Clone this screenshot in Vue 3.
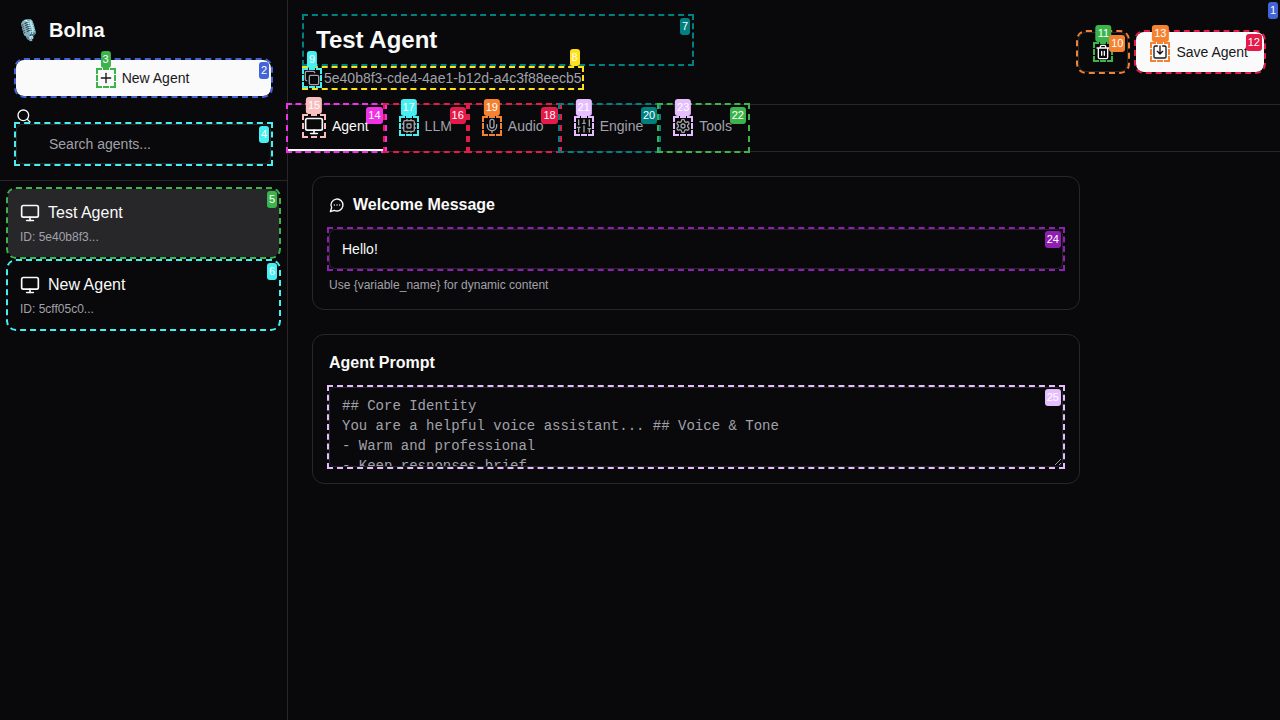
<script setup>
const icons = {
  plus: [['path', 'M5 12h14'], ['path', 'M12 5v14']],
  search: [['circle', 11, 11, 8], ['path', 'm21 21-4.3-4.3']],
  monitor: [['rect', 2, 3, 20, 14, 2], ['path', 'M8 21h8'], ['path', 'M12 17v4']],
  copy: [['rect', 8, 8, 14, 14, 2], ['path', 'M4 16c-1.1 0-2-.9-2-2V4c0-1.1.9-2 2-2h10c1.1 0 2 .9 2 2']],
  cpu: [['rect', 4, 4, 16, 16, 2], ['rect', 9, 9, 6, 6, 1], ['path', 'M15 2v2M15 20v2M2 15h2M2 9h2M20 15h2M20 9h2M9 2v2M9 20v2']],
  mic: [['path', 'M12 2a3 3 0 0 0-3 3v7a3 3 0 0 0 6 0V5a3 3 0 0 0-3-3Z'], ['path', 'M19 10v2a7 7 0 0 1-14 0v-2'], ['path', 'M12 19v3']],
  sliders: [['path', 'M4 21v-7M4 10V3M12 21v-9M12 8V3M20 21v-5M20 12V3M2 14h4M10 8h4M18 16h4']],
  gear: [['path', 'M12.22 2h-.44a2 2 0 0 0-2 2v.18a2 2 0 0 1-1 1.73l-.43.25a2 2 0 0 1-2 0l-.15-.08a2 2 0 0 0-2.73.73l-.22.38a2 2 0 0 0 .73 2.73l.15.1a2 2 0 0 1 1 1.72v.51a2 2 0 0 1-1 1.74l-.15.09a2 2 0 0 0-.73 2.73l.22.38a2 2 0 0 0 2.73.73l.15-.08a2 2 0 0 1 2 0l.43.25a2 2 0 0 1 1 1.73V20a2 2 0 0 0 2 2h.44a2 2 0 0 0 2-2v-.18a2 2 0 0 1 1-1.73l.43-.25a2 2 0 0 1 2 0l.15.08a2 2 0 0 0 2.73-.73l.22-.39a2 2 0 0 0-.73-2.73l-.15-.08a2 2 0 0 1-1-1.74v-.5a2 2 0 0 1 1-1.74l.15-.09a2 2 0 0 0 .73-2.73l-.22-.38a2 2 0 0 0-2.73-.73l-.15.08a2 2 0 0 1-2 0l-.43-.25a2 2 0 0 1-1-1.73V4a2 2 0 0 0-2-2z'], ['circle', 12, 12, 3]],
  trash: [['path', 'M3 6h18M19 6v14c0 1-1 2-2 2H7c-1 0-2-1-2-2V6M8 6V4c0-1 1-2 2-2h4c1 0 2 1 2 2v2M10 11v6M14 11v6']],
  save: [['path', 'M8 3H5a2 2 0 0 0-2 2v14a2 2 0 0 0 2 2h14a2 2 0 0 0 2-2V5a2 2 0 0 0-2-2h-3'], ['path', 'M12 3v12M8 11l4 4 4-4']],
  chat: [['path', 'M7.9 20A9 9 0 1 0 4 16.1L2 22Z'], ['path', 'M8 12h.01M12 12h.01M16 12h.01']]
}

const tabs = [
  { name: 'Agent', icon: 'monitor', color: '#f032e6', n: 14, iconColor: '#fabebe', iconN: 15, big: true, active: true },
  { name: 'LLM', icon: 'cpu', color: '#e6194b', n: 16, iconColor: '#46f0f0', iconN: 17 },
  { name: 'Audio', icon: 'mic', color: '#e6194b', n: 18, iconColor: '#f58231', iconN: 19 },
  { name: 'Engine', icon: 'sliders', color: '#008080', n: 20, iconColor: '#e6beff', iconN: 21 },
  { name: 'Tools', icon: 'gear', color: '#3cb44b', n: 22, iconColor: '#e6beff', iconN: 23 }
]

const agents = [
  { name: 'Test Agent', id: 'ID: 5e40b8f3...', color: '#3cb44b', n: 5, active: true },
  { name: 'New Agent', id: 'ID: 5cff05c0...', color: '#46f0f0', n: 6 }
]

const prompt = '## Core Identity\nYou are a helpful voice assistant... ## Voice & Tone\n- Warm and professional\n- Keep responses brief\n- Ask one question at a time'

const shape = (s) => {
  if (s[0] === 'path') return { tag: 'path', attrs: { d: s[1] } }
  if (s[0] === 'circle') return { tag: 'circle', attrs: { cx: s[1], cy: s[2], r: s[3] } }
  return { tag: 'rect', attrs: { x: s[1], y: s[2], width: s[3], height: s[4], rx: s[5] } }
}
</script>

<template>
  <div class="app">
    <aside class="sidebar">
      <div class="side-head">
        <div class="logo"><span class="emoji">🎙️</span><span>Bolna</span></div>
        <button class="btn primary wide mark" :style="{ outlineColor: '#4363d8' }">
          <span class="icon mark" :style="{ outlineColor: '#3cb44b' }">
            <svg viewBox="0 0 24 24"><component :is="shape(s).tag" v-for="(s, i) in icons.plus" :key="i" v-bind="shape(s).attrs" /></svg>
            <span class="badge above" :style="{ background: '#3cb44b' }">3</span>
          </span>
          New Agent
          <span class="badge corner" :style="{ background: '#4363d8' }">2</span>
        </button>
        <svg class="search-icon" viewBox="0 0 24 24"><component :is="shape(s).tag" v-for="(s, i) in icons.search" :key="i" v-bind="shape(s).attrs" /></svg>
        <div class="mark search-wrap" :style="{ outlineColor: '#46f0f0' }">
          <input class="field search" placeholder="Search agents..." />
          <span class="badge corner" :style="{ background: '#46f0f0' }">4</span>
        </div>
      </div>
      <div class="agent-list">
        <div v-for="a in agents" :key="a.n" class="agent mark" :class="{ selected: a.active }" :style="{ outlineColor: a.color }">
          <div class="agent-name">
            <svg class="icon-20" viewBox="0 0 24 24"><component :is="shape(s).tag" v-for="(s, i) in icons.monitor" :key="i" v-bind="shape(s).attrs" /></svg>
            {{ a.name }}
          </div>
          <div class="agent-id">{{ a.id }}</div>
          <span class="badge corner" :style="{ background: a.color }">{{ a.n }}</span>
        </div>
      </div>
    </aside>

    <main class="main">
      <header class="top">
        <div class="title-block">
          <div class="mark title-wrap" :style="{ outlineColor: '#008080' }">
            <input class="title" value="Test Agent" />
            <span class="badge corner" :style="{ background: '#008080' }">7</span>
          </div>
          <div class="id-row mark" :style="{ outlineColor: '#ffe119' }">
            <span class="icon mark muted" :style="{ outlineColor: '#46f0f0' }">
              <svg viewBox="0 0 24 24"><component :is="shape(s).tag" v-for="(s, i) in icons.copy" :key="i" v-bind="shape(s).attrs" /></svg>
              <span class="badge above" :style="{ background: '#46f0f0' }">9</span>
            </span>
            5e40b8f3-cde4-4ae1-b12d-a4c3f88eecb5
            <span class="badge above-right" :style="{ background: '#ffe119' }">8</span>
          </div>
        </div>
        <div class="actions">
          <button class="btn ghost mark" :style="{ outlineColor: '#f58231' }">
            <span class="icon mark" :style="{ outlineColor: '#3cb44b' }">
              <svg viewBox="0 0 24 24"><component :is="shape(s).tag" v-for="(s, i) in icons.trash" :key="i" v-bind="shape(s).attrs" /></svg>
              <span class="badge above" :style="{ background: '#3cb44b' }">11</span>
            </span>
            <span class="badge corner" :style="{ background: '#f58231' }">10</span>
          </button>
          <button class="btn primary mark" :style="{ outlineColor: '#e6194b' }">
            <span class="icon mark" :style="{ outlineColor: '#f58231' }">
              <svg viewBox="0 0 24 24"><component :is="shape(s).tag" v-for="(s, i) in icons.save" :key="i" v-bind="shape(s).attrs" /></svg>
              <span class="badge above" :style="{ background: '#f58231' }">13</span>
            </span>
            Save Agent
            <span class="badge corner" :style="{ background: '#e6194b' }">12</span>
          </button>
        </div>
        <span class="badge corner" :style="{ background: '#4363d8' }">1</span>
      </header>

      <nav class="tabs">
        <div v-for="t in tabs" :key="t.name" class="tab mark" :class="{ current: t.active }" :style="{ outlineColor: t.color }">
          <span class="icon mark" :class="{ large: t.big }" :style="{ outlineColor: t.iconColor }">
            <svg viewBox="0 0 24 24"><component :is="shape(s).tag" v-for="(s, i) in icons[t.icon]" :key="i" v-bind="shape(s).attrs" /></svg>
            <span class="badge above" :style="{ background: t.iconColor }">{{ t.iconN }}</span>
          </span>
          {{ t.name }}
          <span class="badge corner" :style="{ background: t.color }">{{ t.n }}</span>
        </div>
      </nav>

      <section class="content">
        <div class="card">
          <h3 class="card-title">
            <svg class="chat" viewBox="0 0 24 24"><component :is="shape(s).tag" v-for="(s, i) in icons.chat" :key="i" v-bind="shape(s).attrs" /></svg>
            Welcome Message
          </h3>
          <div class="mark" :style="{ outlineColor: '#911eb4', position: 'relative' }">
            <input class="field" value="Hello!" />
            <span class="badge corner" :style="{ background: '#911eb4' }">24</span>
          </div>
          <p class="help">Use {variable_name} for dynamic content</p>
        </div>
        <div class="card">
          <h3 class="card-title">Agent Prompt</h3>
          <div class="mark area-wrap" :style="{ outlineColor: '#e6beff' }">
            <textarea class="field area" :value="prompt"></textarea>
            <span class="badge corner" :style="{ background: '#e6beff' }">25</span>
          </div>
        </div>
      </section>
    </main>
  </div>
</template>

<style>
html, body { margin: 0; background: #09090b; }
</style>

<style scoped>
.app {
  display: flex;
  width: 1280px;
  height: 720px;
  overflow: hidden;
  background: #09090b;
  color: #fafafa;
  font-family: "Liberation Sans", Arial, sans-serif;
  font-size: 14px;
}
.sidebar {
  width: 288px;
  flex: none;
  box-sizing: border-box;
  border-right: 1px solid #27272a;
}
.side-head {
  padding: 16px;
  border-bottom: 1px solid #27272a;
}
.logo {
  display: flex;
  align-items: center;
  gap: 8px;
  height: 28px;
  margin-bottom: 16px;
  font-size: 20px;
  font-weight: 700;
}
.emoji { font-size: 20px; }
svg {
  fill: none;
  stroke: currentColor;
  stroke-width: 2;
  stroke-linecap: round;
  stroke-linejoin: round;
}
.mark {
  position: relative;
  outline: 2px dashed;
}
.badge {
  position: absolute;
  z-index: 5;
  padding: 2px;
  border-radius: 3px;
  color: #fff;
  font-size: 11px;
  font-weight: 400;
  line-height: 13px;
  font-family: "Liberation Sans", Arial, sans-serif;
}
.corner { top: 2px; right: 2px; }
.above { bottom: calc(100% + 2px); left: 50%; transform: translateX(-50%); }
.above-right { bottom: calc(100% + 2px); right: 2px; }
.btn {
  display: inline-flex;
  align-items: center;
  justify-content: center;
  gap: 8px;
  box-sizing: border-box;
  height: 40px;
  padding: 0 16px;
  border: 0;
  border-radius: 8px;
  font: inherit;
}
.primary { background: #fafafa; color: #18181b; }
.wide { width: 100%; height: 36px; }
.ghost { width: 50px; background: #09090b; color: #fafafa; border: 1px solid #27272a; }
.icon {
  display: block;
  width: 16px;
  height: 16px;
  flex: none;
}
.icon svg { display: block; width: 100%; height: 100%; }
.icon.large { width: 20px; height: 20px; color: #fafafa; }
.muted { color: #a1a1aa; }
.search-icon {
  display: block;
  width: 16px;
  height: 16px;
  margin-top: 12px;
  color: #fafafa;
}
.search-wrap { position: relative; }
.field {
  display: block;
  box-sizing: border-box;
  width: 100%;
  height: 40px;
  padding: 0 12px;
  border: 1px solid #27272a;
  border-radius: 6px;
  background: #09090b;
  color: #fafafa;
  font: inherit;
  outline: none;
}
.field::placeholder { color: #a1a1aa; opacity: 1; }
.search { padding-left: 32px; }
.agent-list {
  display: flex;
  flex-direction: column;
  gap: 4px;
  padding: 8px;
}
.agent {
  box-sizing: border-box;
  height: 68px;
  padding: 12px;
  border-radius: 8px;
}
.agent.selected { background: #27272a; }
.agent-name {
  display: flex;
  align-items: center;
  gap: 8px;
  font-size: 16px;
  line-height: 24px;
}
.icon-20 { width: 20px; height: 20px; flex: none; }
.agent-id {
  margin-top: 4px;
  color: #a1a1aa;
  font-size: 12px;
  line-height: 16px;
}
.main {
  flex: 1;
  min-width: 0;
}
.top {
  position: relative;
  display: flex;
  justify-content: space-between;
  align-items: center;
  padding: 16px;
  border-bottom: 1px solid #27272a;
}
.title-wrap { position: relative; width: 388px; height: 48px; }
.title {
  display: block;
  box-sizing: border-box;
  width: 100%;
  height: 100%;
  padding: 0 12px;
  border: 0;
  outline: 0;
  background: transparent;
  color: #fafafa;
  font: 700 24px "Liberation Sans", Arial, sans-serif;
}
.id-row {
  display: flex;
  align-items: center;
  gap: 4px;
  width: max-content;
  height: 20px;
  margin-top: 4px;
  color: #a1a1aa;
  font-size: 14px;
}
.actions { display: flex; gap: 8px; }
.tabs {
  display: flex;
  border-bottom: 1px solid #27272a;
}
.tab {
  display: flex;
  align-items: center;
  gap: 8px;
  box-sizing: border-box;
  height: 46px;
  padding: 0 16px 2px;
  border-bottom: 2px solid transparent;
  color: #a1a1aa;
}
.tab.current { color: #fafafa; border-bottom-color: #fafafa; }
.content {
  display: flex;
  flex-direction: column;
  gap: 24px;
  width: 768px;
  padding: 24px;
}
.card {
  padding: 16px;
  border: 1px solid #27272a;
  border-radius: 12px;
}
.card-title {
  display: flex;
  align-items: center;
  gap: 8px;
  margin: 0 0 12px;
  font-size: 16px;
  font-weight: 700;
  line-height: 24px;
}
.chat { width: 16px; height: 16px; }
.help {
  margin: 8px 0 0;
  color: #a1a1aa;
  font-size: 12px;
  line-height: 16px;
}
.area-wrap { position: relative; height: 80px; }
.area {
  height: 80px;
  padding: 8px 12px;
  font: 14px/20px "Liberation Mono", "Courier New", monospace;
  color: #a1a1aa;
  resize: vertical;
  scrollbar-width: none;
}
</style>
